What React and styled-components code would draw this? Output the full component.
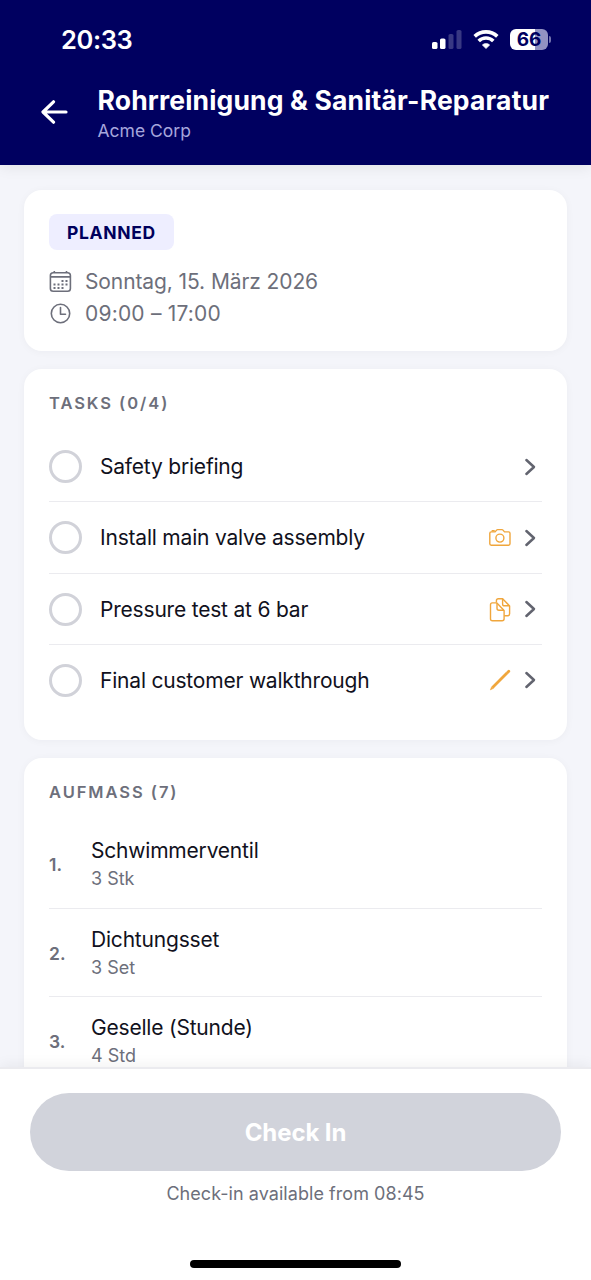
import styled, { createGlobalStyle } from "styled-components";

const GlobalStyle = createGlobalStyle`
  * {
    box-sizing: border-box;
  }
  body {
    margin: 0;
    background: #f4f5fa;
    font-family: Inter, "Liberation Sans", sans-serif;
    color: #111120;
  }
`;

const Screen = styled.div`
  display: flex;
  flex-direction: column;
  height: 1280px;
  overflow: hidden;
`;

const Header = styled.header`
  flex: none;
  height: 165px;
  background: #000060;
  color: #fff;
  box-shadow: 0 2px 14px rgba(0, 0, 0, 0.08);
`;

const StatusBar = styled.div`
  display: flex;
  align-items: center;
  justify-content: space-between;
  height: 79px;
  padding: 0 40px 0 61px;
`;

const Time = styled.span`
  font-size: 25.5px;
  font-weight: 600;
  letter-spacing: -0.4px;
`;

const StatusIcons = styled.div`
  display: flex;
  align-items: center;
  gap: 11px;
  svg {
    display: block;
  }
`;

const TitleRow = styled.div`
  display: flex;
  align-items: center;
  padding: 3px 0 0 41px;
  height: 67px;
`;

const BackButton = styled.button`
  width: 27px;
  height: 24px;
  margin: 0 29.5px 4px 0;
  padding: 0;
  border: 0;
  background: none;
  color: #fff;
  svg {
    display: block;
  }
`;

const Title = styled.h1`
  margin: 0;
  font-size: 26.5px;
  line-height: 33px;
  font-weight: 700;
  letter-spacing: 0.16px;
  white-space: nowrap;
`;

const Customer = styled.div`
  font-size: 17.5px;
  line-height: 27px;
  letter-spacing: 0;
  color: #a6a6dc;
`;

const Content = styled.main`
  flex: 1;
  min-height: 0;
  display: flex;
  flex-direction: column;
  gap: 18px;
  padding: 25px 24px 0;
  overflow: hidden;
`;

const Card = styled.section`
  flex: none;
  padding: 24px 25px ${(props) => props.$bottom || 24}px;
  border-radius: 18px;
  background: #fff;
  box-shadow: 0 1px 8px rgba(20, 20, 60, 0.04);
`;

const Badge = styled.div`
  display: inline-flex;
  align-items: center;
  height: 36px;
  padding: 0 18px;
  border-radius: 8px;
  background: #eeeeff;
  color: #00005c;
  font-size: 17.5px;
  font-weight: 700;
  letter-spacing: 0.65px;
`;

const MetaList = styled.div`
  margin-top: 15px;
`;

const MetaRow = styled.div`
  display: flex;
  align-items: center;
  gap: 13px;
  height: 32px;
  font-size: 21px;
  color: #6d6f7b;
  letter-spacing: ${(props) => props.$tracking}px;
  svg {
    flex: none;
  }
`;

const MetaText = styled.span`
  padding-top: 1px;
`;

const SectionTitle = styled.h2`
  margin: 0;
  font-size: 16.5px;
  line-height: 21px;
  font-weight: 600;
  letter-spacing: 1.95px;
  color: #6d6f7b;
`;

const List = styled.div`
  margin-top: 17px;
`;

const Row = styled.div`
  display: flex;
  align-items: center;
  height: ${(props) => props.$height}px;
  padding-top: ${(props) => props.$offset || 0}px;
  border-bottom: 1.5px solid #ebebef;
  &:last-child {
    border-bottom-color: transparent;
  }
`;

const Radio = styled.span`
  width: 33px;
  height: 33px;
  margin-right: 18px;
  border: 3px solid #d1d2d9;
  border-radius: 50%;
`;

const Label = styled.span`
  flex: 1;
  font-size: 21px;
  letter-spacing: -0.2px;
`;

const RowIcons = styled.span`
  display: flex;
  align-items: center;
  gap: 13px;
  margin-right: 6px;
  color: #f0a63c;
`;

const Index = styled.span`
  width: 42px;
  font-size: 17.5px;
  font-weight: 600;
  color: #6d6f7b;
`;

const ItemName = styled.div`
  font-size: 21px;
  line-height: 28px;
  letter-spacing: -0.2px;
`;

const Quantity = styled.div`
  font-size: 18px;
  line-height: 27px;
  color: #6d6f7b;
`;

const Footer = styled.footer`
  flex: none;
  position: relative;
  display: flex;
  flex-direction: column;
  align-items: center;
  height: 213px;
  padding: 24px 30px 0;
  border-top: 2px solid #ebebef;
  background: #fff;
  box-shadow: 0 -3px 12px rgba(0, 0, 0, 0.05);
`;

const CheckInButton = styled.button`
  width: 100%;
  height: 78px;
  border: 0;
  border-radius: 39px;
  background: #d1d3db;
  color: #fff;
  font: 700 24px Inter, "Liberation Sans", sans-serif;
  letter-spacing: -0.1px;
`;

const Hint = styled.div`
  margin-top: 11px;
  font-size: 18px;
  line-height: 24px;
  letter-spacing: 0.05px;
  color: #6d6f7b;
`;

const HomeIndicator = styled.div`
  width: 211px;
  height: 8px;
  margin-top: 54px;
  border-radius: 4px;
  background: #000;
`;

const BatteryLevel = styled.span`
  display: flex;
  align-items: center;
  gap: 1px;
`;

const BatteryBody = styled.span`
  display: flex;
  align-items: center;
  justify-content: center;
  width: 38px;
  height: 21px;
  border-radius: 6px;
  background: linear-gradient(to right, #fff 66%, #9292c2 66%);
  color: #000060;
  font-size: 19px;
  font-weight: 650;
`;

const BatteryCap = styled.span`
  width: 2px;
  height: 7px;
  border-radius: 0 2px 2px 0;
  background: #7373ae;
`;

const SignalIcon = () => (
  <svg width="30" height="19" viewBox="0 0 30 19" fill="#fff">
    <rect x="0" y="12" width="5.5" height="7" rx="1.6" />
    <rect x="8" y="8.5" width="5.5" height="10.5" rx="1.6" />
    <rect x="16.5" y="4" width="5" height="15" rx="1.6" opacity="0.22" />
    <rect x="24.5" y="0" width="5" height="19" rx="1.6" opacity="0.22" />
  </svg>
);

const WifiIcon = () => (
  <svg width="26" height="19" viewBox="0 0 26 19" fill="none" stroke="#fff" strokeWidth="3.6">
    <path d="M1.7 6.4a16.3 16.3 0 0 1 22.6 0" />
    <path d="M5.7 11a10.4 10.4 0 0 1 14.6 0" />
    <path d="M13 18.6 9.3 15a5.4 5.4 0 0 1 7.4 0Z" fill="#fff" stroke="#fff" strokeWidth="0.6" strokeLinejoin="round" />
  </svg>
);

const BackIcon = () => (
  <svg width="27" height="24" viewBox="0 0 27 24" fill="none" stroke="currentColor" strokeWidth="3.2" strokeLinecap="round" strokeLinejoin="round">
    <path d="M12.5 1.8 2 12l10.5 10.2M2.5 12h22.5" />
  </svg>
);

const CalendarIcon = () => (
  <svg width="23" height="23" viewBox="0 0 23 23" fill="none" stroke="currentColor" strokeWidth="1.6">
    <rect x="1.4" y="2.8" width="20" height="18.5" rx="2.8" />
    <path d="M1.5 6.9h20M5.3 1v2M17.5 1v2" />
    <path d="M12.5 11h7M4.5 14.6h15M4.5 18h11" strokeWidth="2" strokeDasharray="2 2" />
  </svg>
);

const ClockIcon = () => (
  <svg width="23" height="23" viewBox="0 0 23 23" fill="none" stroke="currentColor" strokeWidth="1.6" strokeLinecap="round" strokeLinejoin="round">
    <circle cx="11.5" cy="11.5" r="9.2" />
    <path d="M11.5 5.5v6.7h5" />
  </svg>
);

const CameraIcon = () => (
  <svg width="23" height="23" viewBox="0 0 23 23" fill="none" stroke="currentColor" strokeWidth="1.4" strokeLinejoin="round">
    <path d="M3.2 5.9h3.9l1.5-1.8q.4-.5 1-.5h4.4q.6 0 1 .5l1.5 1.8h4.1q1.4 0 1.4 1.4v10.5q0 1.4-1.4 1.4H3.2q-1.4 0-1.4-1.4V7.3q0-1.4 1.4-1.4Z" />
    <path d="M4.2 5.5V4.8h2v.7" />
    <circle cx="11.9" cy="12.1" r="4" />
  </svg>
);

const FilesIcon = () => (
  <svg width="23" height="25" viewBox="0 0 23 25" fill="none" stroke="currentColor" strokeWidth="1.4" strokeLinejoin="round">
    <path d="M8.4 5.6V3.7q0-2 2-2h4.2l7 7.2v7.9q0 2-2 2h-3.4" />
    <path d="M14.6 1.8v5.1q0 1.9 1.9 1.9h5" />
    <path d="M4.3 5.9h4.6l7.2 7.5v8.4q0 2-2 2H4.5q-2 0-2-2V7.7q0-1.8 1.8-1.8Z" />
    <path d="M9 6.1v5.2q0 2 2 2h5" />
  </svg>
);

const PencilIcon = () => (
  <svg width="23" height="23" viewBox="0 0 23 23" fill="none" stroke="currentColor" strokeLinejoin="round">
    <path d="M4.3 18.7 19 4" strokeWidth="2.8" />
    <path d="m19.6 3.4 1.2-1.2" strokeWidth="2.8" strokeLinecap="round" />
    <path d="m3.5 18-1.2 2.9 2.8-1.3Z" fill="currentColor" strokeWidth="0.5" />
  </svg>
);

const ChevronIcon = () => (
  <svg width="12" height="18" viewBox="0 0 12 18" fill="none" stroke="#62646f" strokeWidth="2.5" strokeLinecap="round" strokeLinejoin="round">
    <path d="m2.4 2 7.6 7-7.6 7" />
  </svg>
);

const tasks = [
  { label: "Safety briefing" },
  { label: "Install main valve assembly", icon: <CameraIcon /> },
  { label: "Pressure test at 6 bar", icon: <FilesIcon /> },
  { label: "Final customer walkthrough", icon: <PencilIcon /> },
];

const items = [
  { name: "Schwimmerventil", quantity: "3 Stk" },
  { name: "Dichtungsset", quantity: "3 Set" },
  { name: "Geselle (Stunde)", quantity: "4 Std" },
];

export default function App() {
  return (
    <>
      <GlobalStyle />
      <Screen>
        <Header>
          <StatusBar>
            <Time>20:33</Time>
            <StatusIcons>
              <SignalIcon />
              <WifiIcon />
              <BatteryLevel>
                <BatteryBody>66</BatteryBody>
                <BatteryCap />
              </BatteryLevel>
            </StatusIcons>
          </StatusBar>
          <TitleRow>
            <BackButton aria-label="Back">
              <BackIcon />
            </BackButton>
            <div>
              <Title>Rohrreinigung &amp; Sanitär-Reparatur</Title>
              <Customer>Acme Corp</Customer>
            </div>
          </TitleRow>
        </Header>
        <Content>
          <Card $bottom={22}>
            <Badge>PLANNED</Badge>
            <MetaList>
              <MetaRow $tracking={-0.1}>
                <CalendarIcon />
                <MetaText>Sonntag, 15. März 2026</MetaText>
              </MetaRow>
              <MetaRow $tracking={0.2}>
                <ClockIcon />
                <MetaText>09:00 – 17:00</MetaText>
              </MetaRow>
            </MetaList>
          </Card>
          <Card>
            <SectionTitle>TASKS (0/4)</SectionTitle>
            <List>
              {tasks.map((task) => (
                <Row key={task.label} $height={71.25} $offset={1}>
                  <Radio />
                  <Label>{task.label}</Label>
                  <RowIcons>
                    {task.icon}
                    <ChevronIcon />
                  </RowIcons>
                </Row>
              ))}
            </List>
          </Card>
          <Card>
            <SectionTitle>AUFMASS (7)</SectionTitle>
            <List>
              {items.map((item, index) => (
                <Row key={item.name} $height={88.5} $offset={2}>
                  <Index>{index + 1}.</Index>
                  <div>
                    <ItemName>{item.name}</ItemName>
                    <Quantity>{item.quantity}</Quantity>
                  </div>
                </Row>
              ))}
            </List>
          </Card>
        </Content>
        <Footer>
          <CheckInButton>Check In</CheckInButton>
          <Hint>Check-in available from 08:45</Hint>
          <HomeIndicator />
        </Footer>
      </Screen>
    </>
  );
}
